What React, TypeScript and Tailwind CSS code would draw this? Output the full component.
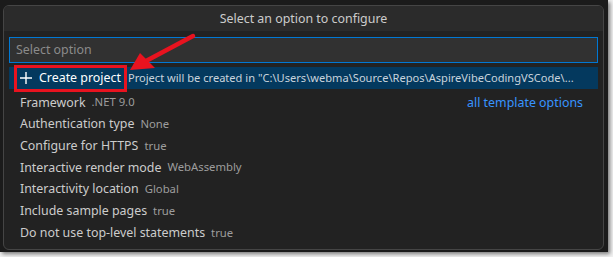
import React from "react";

const rows: [string, string][] = [
  ["Framework", ".NET 9.0"],
  ["Authentication type", "None"],
  ["Configure for HTTPS", "true"],
  ["Interactive render mode", "WebAssembly"],
  ["Interactivity location", "Global"],
  ["Include sample pages", "true"],
  ["Do not use top-level statements", "true"],
];

export default function App() {
  return (
    <div
      className="w-[613px] h-[257px] bg-[#f2f2f2] overflow-hidden"
      style={{ fontFamily: '"Noto Sans", "Open Sans", sans-serif' }}
    >
      <div className="relative w-[608px] h-[252px] bg-[#1b1b1b] pt-[5px] pl-[3px] shadow-[2px_2px_4px_rgba(0,0,0,0.5)]">
        <div className="w-[601px] h-[245px] rounded-[6px] border border-[#454545] bg-[#222222] overflow-hidden flex flex-col">
          <div className="h-[25px] pt-[1px] bg-[#2b2b2b] flex items-center justify-center text-[12.4px] text-[#cccccc]">
            Select an option to configure
          </div>
          <div className="px-[5px] pt-[6px]">
            <div className="h-[26px] border border-[#0078d4] bg-[#313131] flex items-center px-[6px] text-[12.4px] text-[#8b8b8b]">
              Select option
            </div>
            <div className="mt-[4px] h-[22px] bg-[#04395e] flex items-center pl-[10px] text-[12.4px] whitespace-nowrap overflow-hidden">
              <svg width="14" height="14" viewBox="0 0 14 14" className="shrink-0">
                <path d="M7 1v12M1 7h12" stroke="#ffffff" strokeWidth="1.4" />
              </svg>
              <span className="ml-[6px] text-white">Create project</span>
              <span className="ml-[7px] text-[11.1px] text-[#c9d4dd]">
                Project will be created in "C:\Users\webma\Source\Repos\AspireVibeCodingVSCode\...
              </span>
            </div>
            <div className="mt-[3px] flex flex-col">
              {rows.map(([label, desc], i) => (
                <div key={label} className="h-[21.7px] flex items-center pl-[11px] pr-[15px] text-[12.4px] whitespace-nowrap">
                  <span className="text-[#cccccc]">{label}</span>
                  <span className="ml-[6px] text-[11.3px] text-[#9d9d9d]">{desc}</span>
                  {i === 0 && <span className="ml-auto text-[#3794ff]">all template options</span>}
                </div>
              ))}
            </div>
          </div>
        </div>
        {/* red highlight box */}
        <div className="absolute left-[14px] top-[65px] w-[113px] h-[27px] border-[3px] border-[#e8131f]" />
        {/* red arrow */}
        <svg className="absolute left-0 top-0" width="608" height="252" viewBox="0 0 608 252">
          <line x1="193" y1="36" x2="146" y2="61" stroke="#e8131f" strokeWidth="4.5" strokeLinecap="round" />
          <polygon points="130,70 140,53 155,68" fill="#e8131f" />
        </svg>
      </div>
    </div>
  );
}
